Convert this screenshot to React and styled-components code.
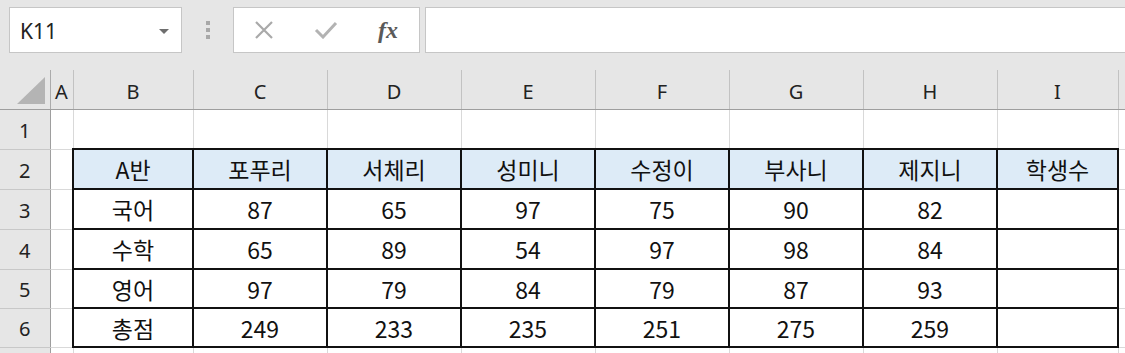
import React from 'react';
import styled, { createGlobalStyle } from 'styled-components';

const GlobalStyle = createGlobalStyle`
  html, body {
    margin: 0;
    padding: 0;
    background: #e6e6e6;
    overflow: hidden;
  }
  body {
    font-family: "Noto Sans CJK KR", "Noto Sans", sans-serif;
  }
`;

const Page = styled.div`
  width: 1125px;
  height: 353px;
  overflow: hidden;
  background: #e6e6e6;
`;

const Toolbar = styled.div`
  height: 70px;
  display: flex;
  align-items: flex-start;
  padding: 7px 0 0 9px;
  box-sizing: border-box;
  background: #e6e6e6;
`;

const Box = styled.div`
  height: 46px;
  box-sizing: border-box;
  background: #fff;
  border: 1px solid #c6c6c6;
  display: flex;
  align-items: center;
`;

const NameBox = styled(Box)`
  width: 173px;
  padding: 2px 12px 0 10px;
  justify-content: space-between;
  font-family: "Noto Sans", "Liberation Sans", sans-serif;
  font-size: 21px;
  color: #222;
`;

const DropArrow = styled.span`
  width: 0;
  height: 0;
  border-left: 5px solid transparent;
  border-right: 5px solid transparent;
  border-top: 5px solid #6e6e6e;
`;

const Grip = styled.div`
  width: 51px;
  height: 46px;
  display: flex;
  flex-direction: column;
  align-items: center;
  justify-content: center;
  gap: 3px;

  span {
    width: 4px;
    height: 4px;
    background: #a8a8a8;
  }
`;

const FormulaButtons = styled(Box)`
  width: 187px;
  padding: 0 20px 0 20px;
  justify-content: space-between;
`;

const FxLabel = styled.span`
  font-family: "Liberation Serif", "DejaVu Serif", serif;
  font-style: italic;
  font-weight: bold;
  font-size: 24px;
  color: #5a5a5a;
  margin-right: 1px;
`;

const FormulaInput = styled(Box)`
  flex: 1;
  margin-left: 5px;
  border-right: none;
`;

const Sheet = styled.table`
  border-collapse: collapse;
  table-layout: fixed;
  width: 1178px;
  background: #fff;
`;

const Row = styled.tr`
  height: ${p => p.$h || 40}px;
`;

const Corner = styled.th`
  position: relative;
  background: #e6e6e6;
  border-right: 1px solid #ababab;
  border-bottom: 1px solid #9e9e9e;
  padding: 0;
`;

const CornerTriangle = styled.span`
  position: absolute;
  right: 5px;
  bottom: 5px;
  width: 0;
  height: 0;
  border-left: 28px solid transparent;
  border-bottom: 27px solid #b4b4b4;
`;

const ColHead = styled.th`
  background: #e6e6e6;
  border-right: 1px solid #c2c2c2;
  border-bottom: 1px solid #9e9e9e;
  font-family: "Noto Sans", "Liberation Sans", sans-serif;
  font-weight: normal;
  font-size: 20px;
  color: #222;
  padding: 4px 0 0;
  text-align: center;
`;

const RowHead = styled.th`
  background: #e6e6e6;
  border-right: 1px solid #9e9e9e;
  border-bottom: 1px solid #c8c8c8;
  font-family: "Noto Sans", "Liberation Sans", sans-serif;
  font-weight: normal;
  font-size: 20px;
  color: #222;
  padding: 2px 0 0;
  text-align: center;
`;

const Cell = styled.td`
  border: ${p => (p.$boxed ? '2px solid #111' : '1px solid #d9d9d9')};
  background: ${p => (p.$head ? '#ddebf7' : '#fff')};
  font-family: "Noto Sans CJK KR", "Noto Sans", sans-serif;
  font-size: 23px;
  line-height: 1;
  color: #111;
  text-align: center;
  padding: 1px 0 0;
  white-space: nowrap;
`;

const cols = ['A', 'B', 'C', 'D', 'E', 'F', 'G', 'H', 'I', ''];
const widths = [50, 23, 120, 134, 134, 134, 134, 134, 134, 121, 60];

const header = ['A반', '포푸리', '서체리', '성미니', '수정이', '부사니', '제지니', '학생수'];
const body = [
  ['국어', 87, 65, 97, 75, 90, 82, ''],
  ['수학', 65, 89, 54, 97, 98, 84, ''],
  ['영어', 97, 79, 84, 79, 87, 93, ''],
  ['총점', 249, 233, 235, 251, 275, 259, ''],
];

const XIcon = () => (
  <svg width="20" height="18" viewBox="0 0 20 18">
    <path d="M2 1 L18 17 M18 1 L2 17" stroke="#a9a9a9" strokeWidth="2.2" fill="none" />
  </svg>
);

const CheckIcon = () => (
  <svg width="24" height="18" viewBox="0 0 24 18">
    <path d="M2 9 L9 16 L22 2" stroke="#b3b3b3" strokeWidth="3" fill="none" />
  </svg>
);

export default function App() {
  return (
    <Page>
      <GlobalStyle />
      <Toolbar>
        <NameBox>
          K11
          <DropArrow />
        </NameBox>
        <Grip>
          <span />
          <span />
          <span />
        </Grip>
        <FormulaButtons>
          <XIcon />
          <CheckIcon />
          <FxLabel>fx</FxLabel>
        </FormulaButtons>
        <FormulaInput />
      </Toolbar>
      <Sheet>
        <colgroup>
          {widths.map((w, i) => (
            <col key={i} style={{ width: w }} />
          ))}
        </colgroup>
        <tbody>
          <Row $h={39}>
            <Corner>
              <CornerTriangle />
            </Corner>
            {cols.map((c, i) => (
              <ColHead key={i}>{c}</ColHead>
            ))}
          </Row>
          <Row>
            <RowHead>1</RowHead>
            {cols.map((c, i) => (
              <Cell key={i} />
            ))}
          </Row>
          <Row>
            <RowHead>2</RowHead>
            <Cell />
            {header.map((h, i) => (
              <Cell key={i} $boxed $head>
                {h}
              </Cell>
            ))}
            <Cell />
          </Row>
          {body.map((r, ri) => (
            <Row key={ri} $h={ri === 2 || ri === 3 ? 39 : 40}>
              <RowHead>{ri + 3}</RowHead>
              <Cell />
              {r.map((v, i) => (
                <Cell key={i} $boxed>
                  {v}
                </Cell>
              ))}
              <Cell />
            </Row>
          ))}
          <Row>
            <RowHead />
            {cols.map((c, i) => (
              <Cell key={i} />
            ))}
          </Row>
        </tbody>
      </Sheet>
    </Page>
  );
}
